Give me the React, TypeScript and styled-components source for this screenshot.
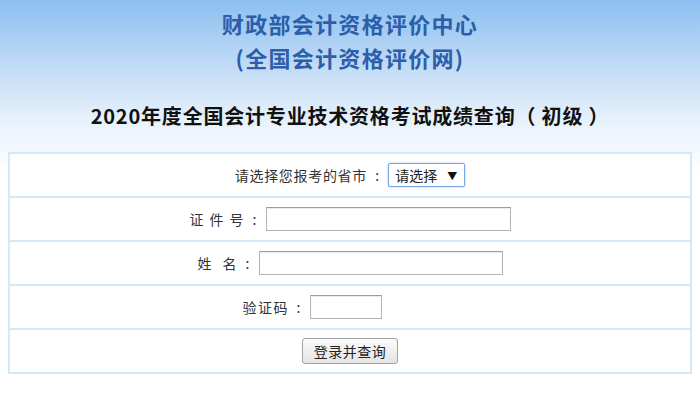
import React from "react";
import styled, { createGlobalStyle } from "styled-components";

const GlobalStyle = createGlobalStyle`
  html, body {
    margin: 0;
    padding: 0;
    background: #ffffff;
  }
  body {
    font-family: "Noto Sans CJK SC", "Noto Sans", "Liberation Sans", sans-serif;
  }
`;

const Page = styled.div`
  width: 700px;
  height: 395px;
  overflow: hidden;
  background: linear-gradient(to bottom, #8cbff0 0px, #c4ddf6 70px, #eaf3fc 125px, #ffffff 175px);
`;

const Header = styled.header`
  display: flex;
  flex-direction: column;
  align-items: center;
  padding-top: 6px;
`;

const OrgTitle = styled.h1`
  margin: 0;
  font-size: 22px;
  line-height: 34px;
  font-weight: 700;
  letter-spacing: 1.3px;
  color: #2c5ea9;
`;

const ExamTitle = styled.h2`
  margin: 28px 0 0;
  font-size: 20px;
  line-height: 28px;
  font-weight: 700;
  letter-spacing: 0.8px;
  color: #111;
  white-space: pre;
`;

const Form = styled.div`
  margin: 22px 8px 0;
  border: 2px solid #d3e9f8;
  border-bottom-width: 0;
  background: #ffffff;
`;

const Row = styled.div`
  height: 42px;
  border-bottom: 2px solid #d3e9f8;
  display: flex;
  align-items: center;
  justify-content: center;
  font-size: 14px;
  color: #333;
`;

const Label = styled.label<{ $gap: number }>`
  display: inline-flex;
  gap: ${(p) => p.$gap}px;
  white-space: nowrap;
`;

const Colon = styled.span`
  display: inline-block;
  width: 22px;
  text-align: center;
`;

const TextInput = styled.input<{ $w: number }>`
  width: ${(p) => p.$w}px;
  height: 24px;
  box-sizing: border-box;
  border: 1px solid #b4b4b4;
  border-top-color: #9c9c9c;
  box-shadow: inset 0 1px 1px rgba(0, 0, 0, 0.08);
  padding: 0 4px;
  font-size: 13px;
  font-family: inherit;
  background: #fff;
`;

// the captcha picture is not loaded, but it still keeps its place
const CaptchaSlot = styled.span`
  display: inline-block;
  width: 76px;
`;

const Select = styled.div`
  width: 77px;
  height: 24px;
  box-sizing: border-box;
  border: 1px solid #7aa7e4;
  border-radius: 2px;
  box-shadow: 0 0 2px rgba(90, 150, 230, 0.6);
  display: flex;
  align-items: center;
  justify-content: space-between;
  padding: 0 7px 0 6px;
  font-size: 14px;
  color: #222;
  background: #fff;
`;

const Caret = styled.span`
  font-size: 10px;
  color: #111;
`;

const Button = styled.button`
  width: 96px;
  height: 26px;
  box-sizing: border-box;
  border: 1px solid #a3a3a3;
  border-radius: 3px;
  background: linear-gradient(to bottom, #fbfbfb, #e4e4e4);
  font-family: inherit;
  font-size: 14px;
  color: #222;
  letter-spacing: 0.5px;
  padding: 0;
`;

function FieldLabel({ text, gap }: { text: string; gap: number }) {
  return (
    <>
      <Label $gap={gap}>
        {Array.from(text).map((ch, i) => (
          <span key={i}>{ch}</span>
        ))}
      </Label>
      <Colon>:</Colon>
    </>
  );
}

const fields = [
  { label: "证件号", gap: 6, width: 245 },
  { label: "姓名", gap: 11, width: 244 },
];

export default function App() {
  return (
    <Page>
      <GlobalStyle />
      <Header>
        <OrgTitle>财政部会计资格评价中心</OrgTitle>
        <OrgTitle>(全国会计资格评价网)</OrgTitle>
        <ExamTitle>2020年度全国会计专业技术资格考试成绩查询（ 初级 ）</ExamTitle>
      </Header>
      <Form>
        <Row>
          <FieldLabel text="请选择您报考的省市" gap={0.7} />
          <Select>
            请选择 <Caret>▼</Caret>
          </Select>
        </Row>
        {fields.map((f) => (
          <Row key={f.label}>
            <FieldLabel text={f.label} gap={f.gap} />
            <TextInput $w={f.width} />
          </Row>
        ))}
        <Row>
          <FieldLabel text="验证码" gap={1.5} />
          <TextInput $w={72} />
          <CaptchaSlot />
        </Row>
        <Row>
          <Button>登录并查询</Button>
        </Row>
      </Form>
    </Page>
  );
}
